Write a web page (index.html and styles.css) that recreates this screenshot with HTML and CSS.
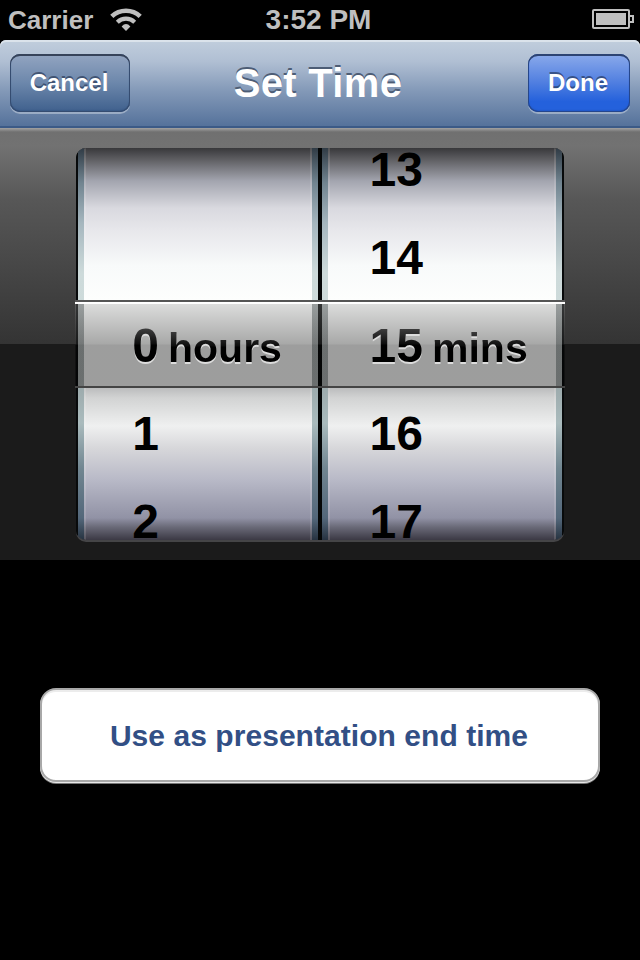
FILE: index.html
```html
<!DOCTYPE html>
<html lang="en">
<head>
<meta charset="utf-8">
<title>Set Time</title>
<link rel="stylesheet" href="styles.css">
</head>
<body>
<header class="status">
  <div class="carrier"><span>Carrier</span>
    <svg class="wifi" width="32" height="24" viewBox="0 0 32 24">
      <path d="M1.8 8.4A20.5 20.5 0 0 1 30.2 8.4" fill="none" stroke="#bfbfbf" stroke-width="4.6"/>
      <path d="M7.3 14.2A12.6 12.6 0 0 1 24.7 14.2" fill="none" stroke="#bfbfbf" stroke-width="4.2"/>
      <path d="M11.6 18.4Q16 13.8 20.4 18.4L16 23Z" fill="#bfbfbf"/>
    </svg>
  </div>
  <div class="clock">3:52 PM</div>
  <svg class="battery" width="42" height="20" viewBox="0 0 42 20">
    <rect x="1" y="1" width="36" height="18" rx="1" fill="none" stroke="#bfbfbf" stroke-width="2"/>
    <rect x="4" y="4" width="30" height="12" fill="#bfbfbf"/>
    <path d="M38 7h3v6h-3" fill="none" stroke="#bfbfbf" stroke-width="2"/>
  </svg>
</header>
<nav class="navbar">
  <button class="btn cancel">Cancel</button>
  <h1>Set Time</h1>
  <button class="btn done">Done</button>
</nav>
<section class="panel">
  <div class="picker">
    <div class="drum">
      <div class="wheel hours">
        <div class="row"></div>
        <div class="row"></div>
        <div class="row selected"><span class="num">0</span><span class="unit">hours</span></div>
        <div class="row"><span class="num">1</span></div>
        <div class="row"><span class="num">2</span></div>
      </div>
      <div class="gap"></div>
      <div class="wheel mins">
        <div class="row"><span class="num">13</span></div>
        <div class="row"><span class="num">14</span></div>
        <div class="row selected"><span class="num">15</span><span class="unit">mins</span></div>
        <div class="row"><span class="num">16</span></div>
        <div class="row"><span class="num">17</span></div>
      </div>
    </div>
    <div class="lens"></div>
  </div>
</section>
<main class="content">
  <button class="action">Use as presentation end time</button>
</main>
</body>
</html>
```
FILE: styles.css
```css
* { box-sizing: border-box; }
body {
  margin: 0;
  width: 640px;
  height: 960px;
  overflow: hidden;
  background: #000;
  font-family: "Liberation Sans", Arial, sans-serif;
  font-weight: bold;
}
button { font: inherit; padding: 0; border: 0; }

.status {
  display: grid;
  grid-template-columns: 1fr auto 1fr;
  height: 40px;
  padding: 0 6px 0 8px;
  align-items: center;
  color: #bfbfbf;
  font-size: 26px;
}
.carrier { display: flex; align-items: center; gap: 17px; }
.clock { font-size: 28px; margin-right: 5px; }
.battery { justify-self: end; margin-top: -2px; }

.navbar {
  display: grid;
  grid-template-columns: 120px 1fr 102px;
  align-items: start;
  height: 88px;
  padding: 14px 10px 0;
  border-radius: 6px 6px 0 0;
  border-bottom: 2px solid #3b5a87;
  background: linear-gradient(#c1cedd, #b0bfd3 25%, #8298b7 60%, #55729b);
  box-shadow: inset 0 2px #dbe3eb;
}
.navbar h1 {
  margin: 6px 22px 0 0;
  text-align: center;
  font-size: 40px;
  letter-spacing: .3px;
  line-height: 46px;
  color: #fff;
  text-shadow: 0 -2px #4d5d75;
}
.btn {
  height: 58px;
  padding-right: 2px;
  border-radius: 10px;
  color: #fff;
  font-size: 24px;
  text-shadow: 0 -2px rgba(30, 45, 75, .6);
}
.cancel {
  background: linear-gradient(#93a5c1, #6c87ab 50%, #3f608d);
  box-shadow: inset 0 2px #36435a, inset 0 0 0 1px #354c70, inset 0 -1px 2px #2c4a75, 0 2px rgba(255,255,255,.35);
}
.done {
  background: linear-gradient(#8baaeb, #4f7ee0 50%, #2461dc 82%);
  box-shadow: inset 0 2px #2d4473, inset 0 0 0 1px #25468c, inset 0 -1px 2px #1c489f, 0 2px rgba(255,255,255,.35);
}

.panel {
  height: 432px;
  padding: 20px 76px 0;
  background: linear-gradient(#a2a2a2, #8a8a8a 2px, #707070 4px, #727272 18px, #575757 72px, #343434 216px, #1b1b1b 216px);
}
.picker { position: relative; }
.drum {
  display: grid;
  grid-template-columns: 242px 4px 242px;
  height: 392px;
  border-radius: 10px;
  overflow: hidden;
  background: #050707;
  box-shadow: 0 2px #454547;
}
.wheel {
  position: relative;
  height: 392px;
  overflow: hidden;
  background: linear-gradient(#38383b, #606064 12px, #a3a5af 33px, #d9d9df 60px, #e7e7eb 82px, #f8fafa 118px, #fdfefd 152px, #fdfefd 238px, #b9babb 239px, #d2d3d3 250px, #eff0f0 278px, #d7d7da 300px, #b8b9c7 332px, #9192a5 370px, #6a6a78 379px, #3b3944 392px);
}
.wheel::before {
  content: "";
  position: absolute;
  inset: 0;
  border: solid rgba(255, 255, 255, .13);
  border-width: 0 8px;
}
.wheel::after {
  content: "";
  position: absolute;
  inset: 0;
  background: linear-gradient(#303b45, #718490 35px, #a5b6be 75px, #cddada 125px, #d0dddd 239px, #9dabad 240px, #aabbbd 275px, #718691 320px, #53677a 370px, #263240 392px);
  clip-path: polygon(0 0, 6px 0, 6px 100%, 234px 100%, 234px 0, 100% 0, 100% 100%, 0 100%);
}
.hours { border-left: 2px solid #080a0b; }
.mins { border-right: 2px solid #080a0b; }
.gap { background: #050707; }
.row {
  position: relative;
  display: flex;
  align-items: baseline;
  height: 88px;
  line-height: 48px;
  color: #000;
}
.row:first-child { margin-top: -2px; }
.num { font-size: 48px; text-align: right; }
.hours .num { width: 81px; }
.mins .num { width: 101px; }
.unit { margin-left: 9px; font-size: 41px; }
.selected { z-index: 3; }
.selected .num, .selected .unit {
  color: transparent;
  background: linear-gradient(#3a3a3a 8px, #0c0c0c 22px, #000 23px);
  background-clip: text;
  -webkit-background-clip: text;
  filter: drop-shadow(0 2px 0 #dcdcdc);
}
.lens {
  position: absolute;
  inset: 152px -1px auto;
  height: 88px;
  border-top: 2px solid #555;
  border-bottom: 2px solid #444;
  background:
    linear-gradient(#fff 2px, transparent 2px),
    linear-gradient(90deg, transparent 3px, rgba(30,20,20,.22) 3px 9px, transparent 9px 237px, rgba(30,20,20,.22) 237px 243px, transparent 243px 247px, rgba(30,20,20,.22) 247px 253px, transparent 253px 481px, rgba(30,20,20,.22) 481px 487px, transparent 487px),
    linear-gradient(rgba(150,150,150,.32) 2px, rgba(50,50,50,.42) 42px, rgba(0,0,0,.38) 43px);
}

.content { padding: 128px 40px 0; }
.action {
  display: block;
  width: 560px;
  height: 94px;
  padding: 2px 2px 0 0;
  border: 2px solid #a8a8a8;
  border-radius: 16px;
  background: #fff;
  box-shadow: inset 0 2px #ececec, 0 1px #e8e8e8, 0 2px #777;
  color: #324f85;
  font-size: 30px;
  letter-spacing: .05px;
}
```
